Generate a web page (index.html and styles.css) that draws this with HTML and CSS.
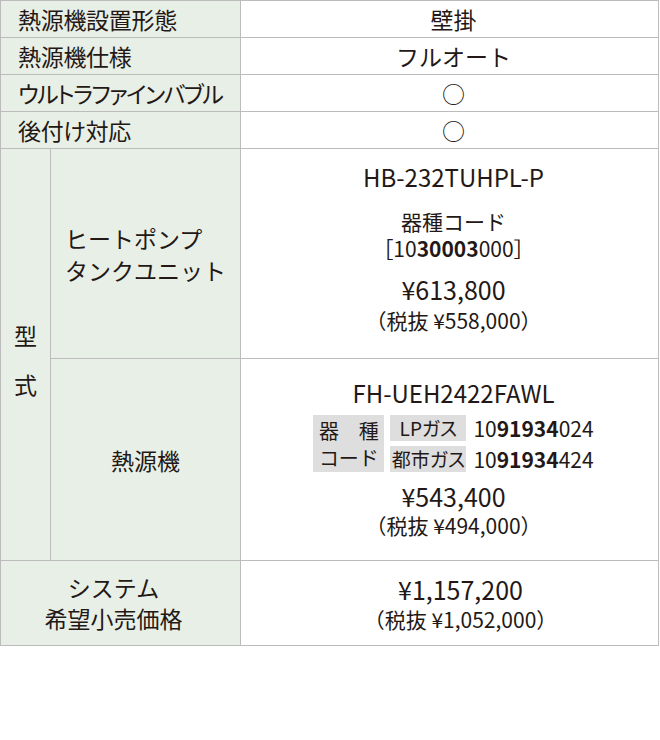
FILE: index.html
```html
<!DOCTYPE html>
<html lang="ja">
<head>
<meta charset="utf-8">
<link rel="stylesheet" href="styles.css">
</head>
<body>
<table class="spec">
  <colgroup>
    <col class="c1">
    <col class="c2">
    <col class="c3">
  </colgroup>
  <tr class="r-s">
    <th colspan="2" class="lab">熱源機設置形態</th>
    <td class="val">壁掛</td>
  </tr>
  <tr class="r-s">
    <th colspan="2" class="lab">熱源機仕様</th>
    <td class="val">フルオート</td>
  </tr>
  <tr class="r-s">
    <th colspan="2" class="lab narrow">ウルトラファインバブル</th>
    <td class="val">○</td>
  </tr>
  <tr class="r-s">
    <th colspan="2" class="lab">後付け対応</th>
    <td class="val">○</td>
  </tr>
  <tr class="r-hp">
    <th rowspan="2" class="kata"><span>型</span><span>式</span></th>
    <th class="sub"><span class="blk">ヒートポンプ<br>タンクユニット</span></th>
    <td class="val top hp">
      <div class="model m1">HB-232TUHPL-P</div>
      <div class="code">器種コード</div>
      <div class="code">［10<b>30003</b>000］</div>
      <div class="price pr1">¥613,800</div>
      <div class="tax">（税抜 ¥558,000）</div>
    </td>
  </tr>
  <tr class="r-hs">
    <th class="sub">熱源機</th>
    <td class="val top hs">
      <div class="model m2">FH-UEH2422FAWL</div>
      <div class="codes">
        <div class="kbox">器　種<br>コード</div>
        <div class="gas">
          <div class="grow"><span class="gbox">LPガス</span><span class="gnum">10<b>91934</b>024</span></div>
          <div class="grow"><span class="gbox">都市ガス</span><span class="gnum">10<b>91934</b>424</span></div>
        </div>
      </div>
      <div class="price pr2">¥543,400</div>
      <div class="tax tx2">（税抜 ¥494,000）</div>
    </td>
  </tr>
  <tr class="r-sys">
    <th colspan="2" class="sys">システム<br>希望小売価格</th>
    <td class="val sysv">
      <div class="price">¥1,157,200</div>
      <div class="tax">（税抜 ¥1,052,000）</div>
    </td>
  </tr>
</table>
</body>
</html>
```

FILE: styles.css
```css
html, body {
  margin: 0;
  padding: 0;
  background: #fff;
}
body {
  font-family: "Noto Sans CJK JP", "Noto Sans", sans-serif;
  color: #231815;
}
.spec {
  border-collapse: collapse;
  table-layout: fixed;
  width: 658px;
}
.c1 { width: 50px; }
.c2 { width: 190px; }
.c3 { width: 418px; }
.spec th, .spec td {
  border: 1px solid #bcbcbc;
  padding: 0;
  font-weight: 400;
}
.spec th {
  background: #e8efe6;
}
.r-s { height: 37px; }
.lab {
  text-align: left;
  padding-left: 17px !important;
  font-size: 23px;
  line-height: 30px;
  font-feature-settings: "palt";
  letter-spacing: -0.3px;
}
.narrow {
  letter-spacing: -1.6px;
}
.val {
  text-align: center;
  font-size: 23px;
  line-height: 30px;
  padding-left: 8px !important;
}
.top { vertical-align: top; }
.hp { padding-top: 12px !important; }
.hs { padding-top: 18px !important; }
.r-hp { height: 210px; }
.r-hs { height: 202px; }
.r-sys { height: 85px; }
.kata {
  vertical-align: middle;
  font-size: 23px;
  padding-top: 10px !important;
}
.kata span {
  display: block;
  line-height: 49px;
}
.sub {
  font-size: 23px;
  line-height: 32px;
  text-align: center;
}
.blk {
  display: inline-block;
  text-align: left;
}
.sys {
  font-size: 23px;
  line-height: 31px;
  text-align: center;
  padding-right: 14px !important;
}
.sysv {
  padding-left: 22px !important;
}
.model {
  font-size: 24px;
  line-height: 32px;
}
.m1 { margin-bottom: 15px; }
.m2 { margin-bottom: 6px; }
.code {
  font-size: 21px;
  line-height: 27px;
}
.code b, .gnum b { font-weight: 700; }
.price {
  font-size: 25px;
  line-height: 32px;
}
.pr1 { margin-top: 10px; line-height: 34px; }
.pr2 { margin-top: 8px; }
.tax {
  font-size: 21px;
  line-height: 28px;
}
.tx2 { line-height: 26px; }
.codes {
  display: flex;
  justify-content: center;
  align-items: stretch;
  gap: 6px;
}
.kbox {
  background: #dedede;
  width: 71px;
  font-size: 20px;
  line-height: 27px;
  padding-top: 2px;
  box-sizing: border-box;
  text-align: center;
}
.gas {
  display: flex;
  flex-direction: column;
  gap: 5px;
}
.grow {
  display: flex;
  align-items: center;
  gap: 7px;
}
.gbox {
  background: #dedede;
  width: 76px;
  height: 26px;
  line-height: 26px;
  font-size: 19px;
  text-align: center;
  font-feature-settings: "palt";
}
.gnum {
  font-size: 21px;
  line-height: 26px;
}
```
